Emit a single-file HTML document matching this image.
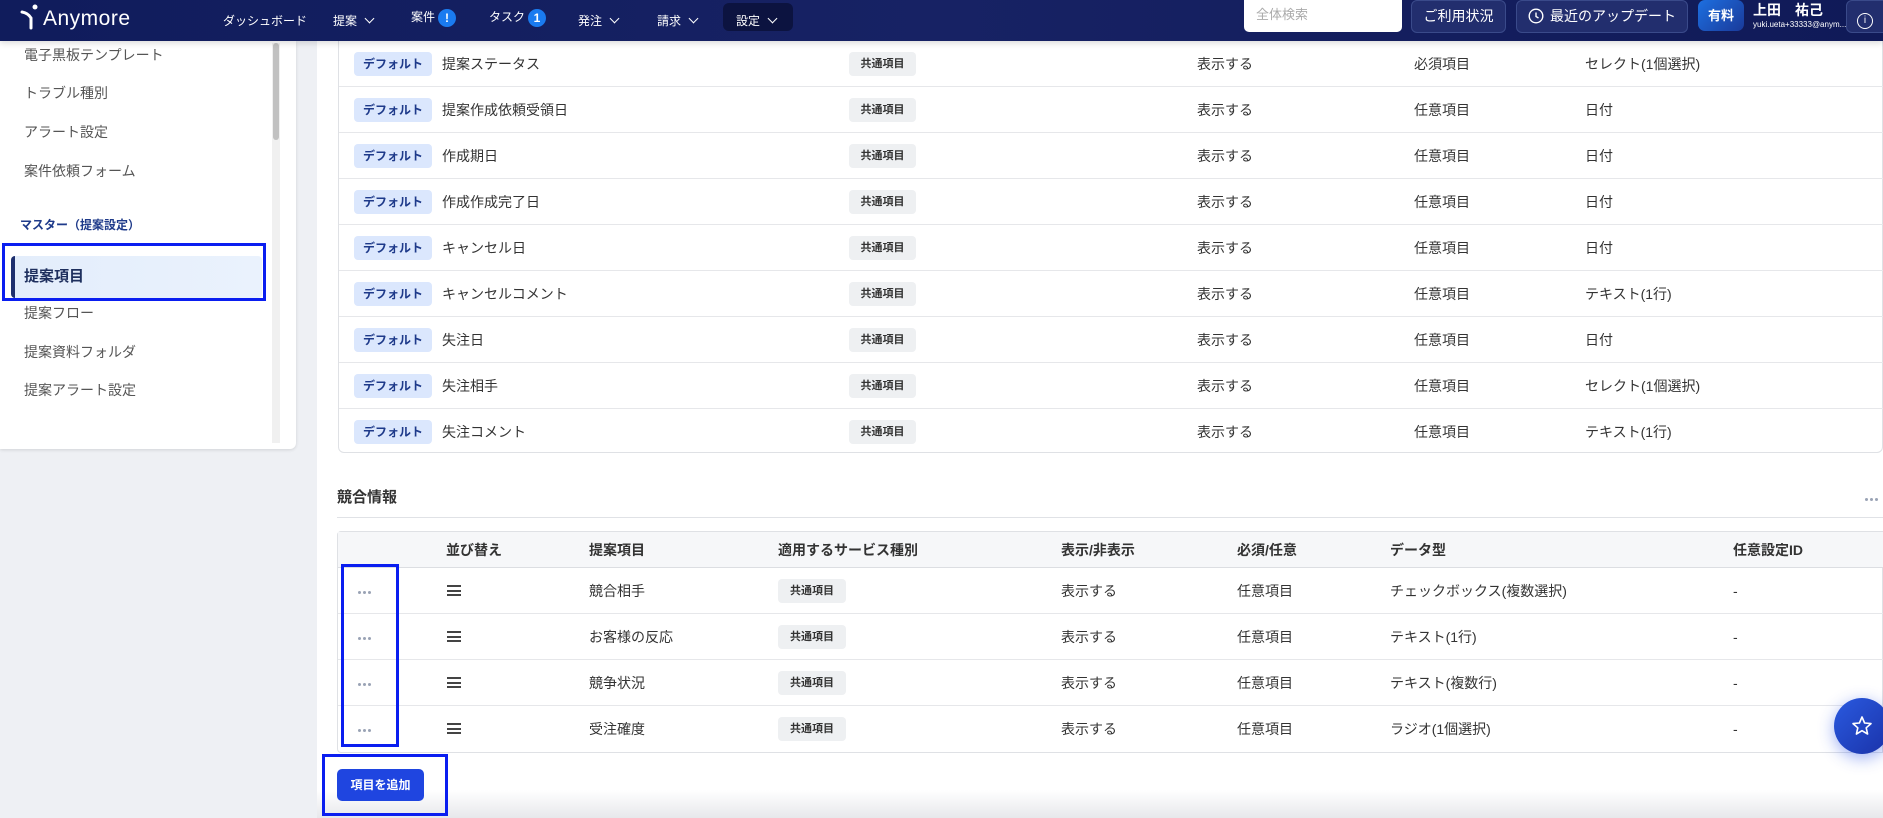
<!DOCTYPE html>
<html><head><meta charset="utf-8"><style>
*{box-sizing:border-box;margin:0;padding:0}
body{width:1883px;height:818px;overflow:hidden;position:relative;background:#fff;font-family:"Liberation Sans","Noto Sans CJK JP",sans-serif;color:#333;font-size:14px}
.hdr{position:absolute;left:0;top:0;width:1883px;height:41px;background:linear-gradient(90deg,#101c5c,#172264 50%,#101a58);z-index:5;box-shadow:0 2px 6px rgba(0,0,0,.15)}
.hdr .t{position:absolute;color:#fff;font-size:12px;top:12px;white-space:nowrap}
.chev{display:inline-block;width:7px;height:7px;border-right:1.3px solid #fff;border-bottom:1.3px solid #fff;transform:rotate(45deg);margin-left:9px;vertical-align:3px}
.badge1{display:inline-block;width:18px;height:18px;border-radius:9px;background:#1a7bf0;color:#fff;text-align:center;font-size:12px;line-height:18px;font-weight:bold;vertical-align:middle;margin-left:3px}
.btn{position:absolute;top:0;height:33px;border:1px solid #3a4a8a;border-radius:6px;background:#222e6e;color:#fff;font-size:14px;line-height:31px;text-align:center}
.side{position:absolute;left:0;top:41px;width:296px;height:408px;background:#fff;border-radius:0 0 6px 0;box-shadow:0 1px 3px rgba(0,0,0,.12)}
.gray{position:absolute;left:0;top:41px;width:317px;height:777px;background:#eef0f4}
.si{position:absolute;left:24px;font-size:14px;color:#555}
.main{position:absolute;left:317px;top:41px;width:1566px;height:777px;background:#fff}
.card{position:absolute;left:338px;top:30px;width:1545px;height:423px;border:1px solid #dfe1e5;border-radius:6px}
.row{position:absolute;left:339px;width:1544px;height:46px;border-bottom:1px solid #e6e7ea}
.cell{position:absolute;top:0;line-height:46px;font-size:14px;color:#333;white-space:nowrap}
.def{position:absolute;left:15px;top:11px;width:78px;height:24px;border-radius:4px;background:#dbe7fd;color:#1e3a8a;font-size:12px;font-weight:bold;text-align:center;line-height:24px}
.com{position:absolute;top:11px;height:24px;border-radius:4px;background:#eef0f2;color:#333;font-size:11px;font-weight:bold;text-align:center;line-height:24px;width:67px}
.t2{position:absolute;left:337px;top:531px;width:1546px;height:222px;border:1px solid #dfe1e5;border-radius:4px 0 0 4px}
.h2{position:absolute;left:338px;top:532px;width:1545px;height:36px;background:#f6f7f9;border-bottom:1px solid #dcdee2}
.h2 span{position:absolute;top:0;line-height:36px;font-weight:bold;font-size:14px;color:#333}
.r2{position:absolute;left:338px;width:1545px;height:46px;border-bottom:1px solid #e6e7ea}
.dots{position:absolute;left:20px;top:21px;width:20px;height:4px;white-space:nowrap;line-height:0}
.dots i{display:inline-block;width:3px;height:3px;border-radius:2px;background:#9aa3b5;margin-right:2px}
.ham{position:absolute;left:109px;top:17px;width:14px;height:11px;border-top:2px solid #444;border-bottom:2px solid #444}
.ham:after{content:"";position:absolute;left:0;top:2.5px;width:14px;height:2px;background:#444}
.box{position:absolute;border:3px solid #0a1ef0}
</style></head><body>
<div class="gray"></div>
<div class="main"></div>
<div class="side">
 <div style="position:absolute;left:272px;top:2px;width:8px;height:400px;background:#f0f0f0"></div>
 <div style="position:absolute;left:273px;top:2px;width:6px;height:97px;background:#c1c1c1;border-radius:3px"></div>
</div>
<div class="si" style="top:45px">電子黒板テンプレート</div>
<div class="si" style="top:83px">トラブル種別</div>
<div class="si" style="top:122px">アラート設定</div>
<div class="si" style="top:161px">案件依頼フォーム</div>
<div class="si" style="top:216px;left:20px;font-size:12px;font-weight:bold;color:#1e3a8a">マスター（提案設定）</div>
<div style="position:absolute;left:11px;top:256px;width:251px;height:42px;background:linear-gradient(90deg,#e3edfb,#eaf2fd);border-left:4px solid #1e2f6e;border-radius:4px"></div>
<div class="si" style="top:265px;font-weight:bold;color:#1e2f5e;font-size:15px">提案項目</div>
<div class="si" style="top:303px">提案フロー</div>
<div class="si" style="top:342px">提案資料フォルダ</div>
<div class="si" style="top:380px">提案アラート設定</div>
<div class="box" style="left:2px;top:243px;width:264px;height:58px"></div>

<div class="card"></div>
<div id="rows"></div>

<div style="position:absolute;left:337px;top:486px;font-size:15px;font-weight:bold;color:#333">競合情報</div>
<div class="dots" style="left:1865px;top:496px"><i></i><i></i><i></i></div>
<div style="position:absolute;left:337px;top:517px;width:1546px;height:1px;background:#e0e2e6"></div>

<div class="t2"></div>
<div class="h2"><span style="left:108px">並び替え</span><span style="left:251px">提案項目</span><span style="left:440px">適用するサービス種別</span><span style="left:723px">表示/非表示</span><span style="left:899px">必須/任意</span><span style="left:1052px">データ型</span><span style="left:1395px">任意設定ID</span></div>
<div id="rows2"></div>

<div style="position:absolute;left:317px;top:790px;width:1566px;height:28px;background:linear-gradient(180deg,rgba(240,240,242,0),rgba(225,226,230,.8))"></div>
<div class="box" style="left:341px;top:564px;width:58px;height:183px"></div>
<div style="position:absolute;left:337px;top:769px;width:87px;height:32px;background:#1f45e0;border-radius:5px;color:#fff;font-size:12px;font-weight:bold;text-align:center;line-height:32px">項目を追加</div>
<div class="box" style="left:322px;top:754px;width:126px;height:62px"></div>

<div style="position:absolute;left:1834px;top:698px;width:56px;height:56px;border-radius:28px;background:linear-gradient(135deg,#2a5ae0,#1a32a8);box-shadow:0 4px 16px rgba(40,80,230,.45)">
<svg width="56" height="56" viewBox="0 0 56 56"><path d="M28 19 L30.6 25 L37 25.6 L32.2 29.8 L33.6 36 L28 32.7 L22.4 36 L23.8 29.8 L19 25.6 L25.4 25 Z" fill="none" stroke="#fff" stroke-width="1.6" stroke-linejoin="round"/></svg></div>

<div class="hdr">
 <svg style="position:absolute;left:20px;top:4px" width="20" height="26" viewBox="0 0 20 26"><circle cx="15" cy="3" r="2.5" fill="#fff"/><path d="M2 8 Q8 9 11 14 L11 24" stroke="#fff" stroke-width="3" fill="none" stroke-linecap="round"/></svg>
 <div style="position:absolute;left:43px;top:7px;color:#fff;font-size:21px;letter-spacing:.5px">Anymore</div>
 <div class="t" style="left:223px">ダッシュボード</div>
 <div class="t" style="left:333px">提案<span class="chev"></span></div>
 <div class="t" style="left:411px;top:8px">案件<span class="badge1">!</span></div>
 <div class="t" style="left:489px;top:8px">タスク<span class="badge1">1</span></div>
 <div class="t" style="left:578px">発注<span class="chev"></span></div>
 <div class="t" style="left:657px">請求<span class="chev"></span></div>
 <div style="position:absolute;left:723px;top:3px;width:70px;height:28px;border-radius:6px;background:#0c1340"></div>
 <div class="t" style="left:736px">設定<span class="chev"></span></div>
 <div style="position:absolute;left:1244px;top:0;width:158px;height:32px;background:#fff;border-radius:0 0 5px 5px;color:#aaa;font-size:13px;line-height:30px;padding-left:12px">全体検索</div>
 <div class="btn" style="left:1411px;width:95px">ご利用状況</div>
 <div class="btn" style="left:1516px;width:172px"><svg width="16" height="16" viewBox="0 0 16 16" style="vertical-align:-3px;margin-right:6px"><circle cx="8" cy="8" r="6.8" fill="none" stroke="#fff" stroke-width="1.4"/><path d="M8 4.5 V8.5 L10.5 10" fill="none" stroke="#fff" stroke-width="1.4"/></svg>最近のアップデート</div>
 <div style="position:absolute;left:1698px;top:0;width:46px;height:31px;border-radius:7px;background:linear-gradient(135deg,#1d6fe0,#1a3a9a);color:#fff;font-size:13px;font-weight:bold;text-align:center;line-height:31px">有料</div>
 <div style="position:absolute;left:1753px;top:0;color:#fff;font-size:14px;font-weight:bold">上田　祐己</div>
 <div style="position:absolute;left:1753px;top:20px;color:#fff;font-size:8px">yuki.ueta+33333@anym...</div>
 <div class="btn" style="left:1846px;width:45px;text-align:left;padding-left:10px"><span style="display:inline-block;width:16px;height:16px;border:1.5px solid #fff;border-radius:8px;font-size:10px;line-height:13px;text-align:center;vertical-align:-2px">i</span></div>
</div>
<script>
var d=[["提案ステータス","必須項目","セレクト(1個選択)"],["提案作成依頼受領日","任意項目","日付"],["作成期日","任意項目","日付"],["作成作成完了日","任意項目","日付"],["キャンセル日","任意項目","日付"],["キャンセルコメント","任意項目","テキスト(1行)"],["失注日","任意項目","日付"],["失注相手","任意項目","セレクト(1個選択)"],["失注コメント","任意項目","テキスト(1行)"]];
var h="";d.forEach(function(r,i){var top=41+i*46;h+='<div class="row" style="top:'+top+'px;'+(i==8?'border-bottom:none':'')+'"><div class="def">デフォルト</div><div class="cell" style="left:103px">'+r[0]+'</div><div class="com" style="left:510px">共通項目</div><div class="cell" style="left:858px">表示する</div><div class="cell" style="left:1075px">'+r[1]+'</div><div class="cell" style="left:1246px">'+r[2]+'</div></div>';});
document.getElementById("rows").innerHTML=h;
var e=[["競合相手","チェックボックス(複数選択)"],["お客様の反応","テキスト(1行)"],["競争状況","テキスト(複数行)"],["受注確度","ラジオ(1個選択)"]];
h="";e.forEach(function(r,i){var top=568+i*46;h+='<div class="r2" style="top:'+top+'px;'+(i==3?'border-bottom:none':'')+'"><div class="dots"><i></i><i></i><i></i></div><div class="ham"></div><div class="cell" style="left:251px">'+r[0]+'</div><div class="com" style="left:440px;width:68px">共通項目</div><div class="cell" style="left:723px">表示する</div><div class="cell" style="left:899px">任意項目</div><div class="cell" style="left:1052px">'+r[1]+'</div><div class="cell" style="left:1395px">-</div></div>';});
document.getElementById("rows2").innerHTML=h;
</script>
</body></html>
